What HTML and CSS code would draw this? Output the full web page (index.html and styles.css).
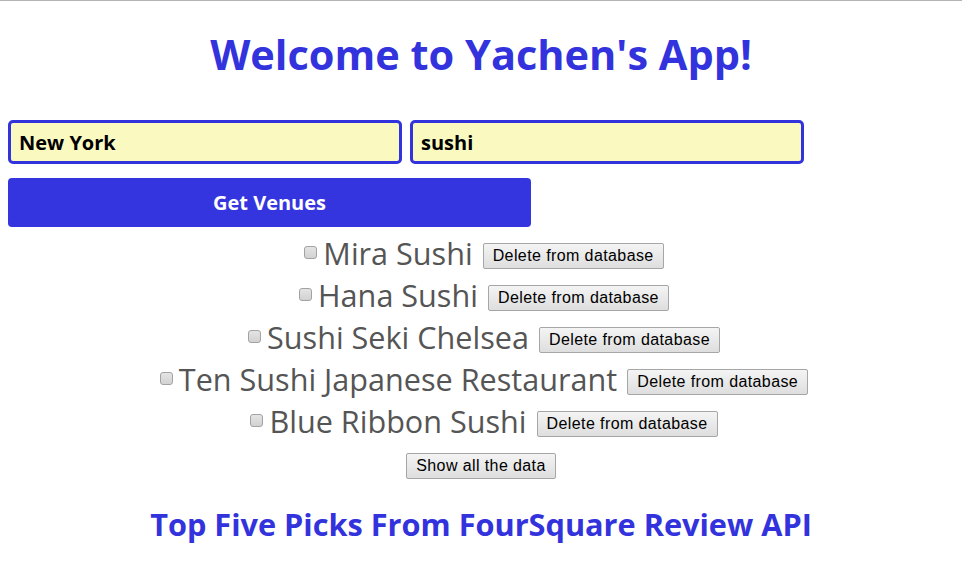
FILE: index.html
```html
<!DOCTYPE html>
<html>
<head>
<meta charset="utf-8">
<title>Yachen's App</title>
<link rel="stylesheet" href="styles.css">
</head>
<body>
<div class="page">
  <h1 class="title">Welcome to Yachen's App!</h1>
  <div class="search">
    <input class="field" type="text" value="New York">
    <input class="field" type="text" value="sushi">
  </div>
  <button class="go">Get Venues</button>
  <ul class="venues">
    <li class="venue"><input type="checkbox" class="check"><span class="name">Mira Sushi</span><button class="plain">Delete from database</button></li>
    <li class="venue"><input type="checkbox" class="check"><span class="name">Hana Sushi</span><button class="plain">Delete from database</button></li>
    <li class="venue"><input type="checkbox" class="check"><span class="name">Sushi Seki Chelsea</span><button class="plain">Delete from database</button></li>
    <li class="venue"><input type="checkbox" class="check"><span class="name">Ten Sushi Japanese Restaurant</span><button class="plain">Delete from database</button></li>
    <li class="venue"><input type="checkbox" class="check"><span class="name">Blue Ribbon Sushi</span><button class="plain">Delete from database</button></li>
  </ul>
  <div class="show-row"><button class="plain">Show all the data</button></div>
  <h2 class="subtitle">Top Five Picks From FourSquare Review API</h2>
</div>
</body>
</html>
```
FILE: styles.css
```css
* { box-sizing: border-box; }
html, body { margin: 0; padding: 0; background: #fff; }
body {
  border-top: 1px solid #b4b4b4;
  font-family: "Open Sans", "Noto Sans", sans-serif;
}
.page { padding: 0 8px; }
.title {
  margin: 0;
  padding-top: 27px;
  text-align: center;
  color: #3333dd;
  font-size: 41.5px;
  font-weight: 700;
  line-height: 52px;
}
.search {
  display: flex;
  gap: 8px;
  margin-top: 40px;
}
.field {
  width: 394px;
  height: 44px;
  border: 3px solid #3333dd;
  border-radius: 5px;
  background: #fafac0;
  padding: 0 8px;
  font-family: "Open Sans", sans-serif;
  font-size: 20px;
  font-weight: 700;
  color: #000;
  outline: none;
}
.go {
  display: block;
  margin-top: 14px;
  width: 523px;
  height: 49px;
  border: none;
  border-radius: 4px;
  background: #3535df;
  color: #fff;
  font-family: "Open Sans", sans-serif;
  font-size: 20px;
  font-weight: 700;
}
.venues {
  list-style: none;
  margin: 8px 0 0;
  padding: 0;
}
.venue {
  display: flex;
  align-items: center;
  justify-content: center;
  height: 42px;
  padding-left: 6px;
  white-space: nowrap;
}
.check {
  appearance: none;
  -webkit-appearance: none;
  width: 13px;
  height: 13px;
  margin: 0 6px 7px 0;
  border: 1px solid #a2a2a2;
  border-radius: 3px;
  background: linear-gradient(#e4e4e4, #d2d2d2);
}
.name {
  font-size: 30.6px;
  line-height: 40px;
  color: #555;
  margin-bottom: 7px;
}
.plain {
  margin-left: 10px;
  height: 26px;
  padding: 0 9px;
  font-family: "Liberation Sans", Arial, sans-serif;
  font-size: 16px;
  letter-spacing: 0.4px;
  color: #000;
  background: linear-gradient(#f4f4f4, #dedede);
  border: 1px solid #a6a6a6;
  border-radius: 2px;
}
.show-row {
  display: flex;
  justify-content: center;
  margin-top: 8px;
}
.show-row .plain { margin-left: 0; }
.subtitle {
  margin: 24px 0 0;
  text-align: center;
  color: #3333dd;
  font-size: 30.7px;
  font-weight: 700;
}
```
